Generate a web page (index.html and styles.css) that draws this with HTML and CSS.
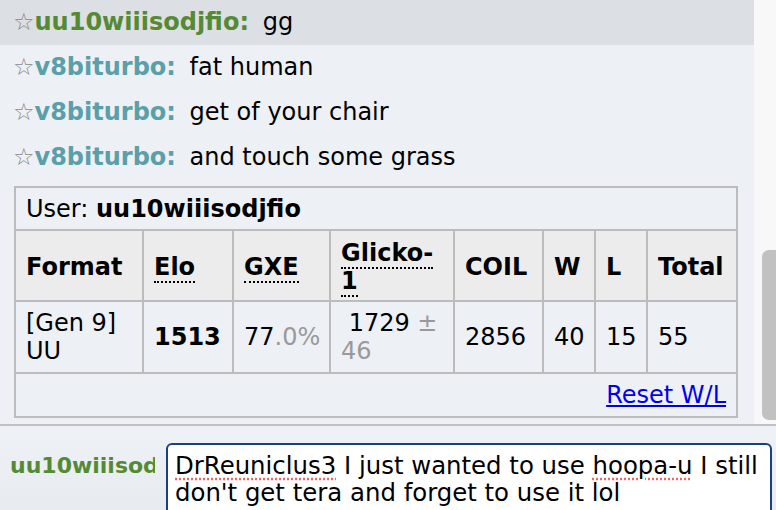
FILE: index.html
```html
<!DOCTYPE html>
<html lang="en">
<head>
    <meta charset="UTF-8">
    <title>Chat</title>
    <link rel="stylesheet" href="styles.css">
</head>
<body>
    <div class="top">
        <div class="chat">
            <div class="msg highlight"><span class="star">☆</span><strong class="name green">uu10wiiisodjfio:</strong> <span class="text">gg</span></div>
            <div class="msg"><span class="star">☆</span><strong class="name teal">v8biturbo:</strong> <span class="text">fat human</span></div>
            <div class="msg"><span class="star">☆</span><strong class="name teal">v8biturbo:</strong> <span class="text">get of your chair</span></div>
            <div class="msg"><span class="star">☆</span><strong class="name teal">v8biturbo:</strong> <span class="text">and touch some grass</span></div>

            <table class="ladder">
                <colgroup>
                    <col class="c-format">
                    <col class="c-elo">
                    <col class="c-gxe">
                    <col class="c-glicko">
                    <col class="c-coil">
                    <col class="c-w">
                    <col class="c-l">
                    <col class="c-total">
                </colgroup>
                <tr><td colspan="8" class="user">User: <strong>uu10wiiisodjfio</strong></td></tr>
                <tr class="head">
                    <th>Format</th>
                    <th><abbr>Elo</abbr></th>
                    <th><abbr>GXE</abbr></th>
                    <th><abbr>Glicko-1</abbr></th>
                    <th>COIL</th>
                    <th>W</th>
                    <th>L</th>
                    <th>Total</th>
                </tr>
                <tr class="data">
                    <td>[Gen 9] UU</td>
                    <td><strong>1513</strong></td>
                    <td>77<span class="dim">.0%</span></td>
                    <td>&nbsp;1729 <span class="dim">± 46</span></td>
                    <td>2856</td>
                    <td>40</td>
                    <td>15</td>
                    <td>55</td>
                </tr>
                <tr><td colspan="8" class="reset"><a href="#">Reset W/L</a></td></tr>
            </table>
        </div>
        <div class="track"><div class="thumb"></div></div>
    </div>

    <div class="bottom">
        <div class="me">uu10wiiisod</div>
        <div class="input"><span class="typo">DrReuniclus3</span> I just wanted to use <span class="typo">hoopa-u</span> I still don't get tera and forget to use it lol</div>
    </div>
</body>
</html>
```

FILE: styles.css
```css
/* chat layout */
body {
    margin: 0;
    width: 776px;
    height: 510px;
    overflow: hidden;
    font-family: "DejaVu Sans", Verdana, sans-serif;
    font-size: 24px;
    color: #000;
    background: #edf1f5;
}
.top {
    display: flex;
    height: 424px;
    border-bottom: 2px solid #bdbfc2;
}
.chat {
    width: 754px;
    background-color: #edf1f5;
    overflow: hidden;
}
.msg {
    height: 45px;
    line-height: 45px;
    padding-left: 13px;
    white-space: nowrap;
}
.highlight {
    background-color: #dcdfe3;
}
.star {
    color: #888;
}
.name {
    margin-right: 6px;
}
.green {
    color: #548a33;
}
.teal {
    color: #5a9fa9;
}
.track {
    flex: 1;
    background-color: #f8f8f8;
    display: flex;
    justify-content: flex-end;
    align-items: flex-end;
    padding-bottom: 4px;
}
.thumb {
    width: 14px;
    height: 170px;
    background-color: #c1c1c1;
    border-radius: 7px 0 0 7px;
}

/* ladder table */
.ladder {
    margin: 6px 0 0 14px;
    width: 722px;
    border-collapse: collapse;
    table-layout: fixed;
    border: 2px solid #bcbcbc;
}
.ladder td, .ladder th {
    border: 2px solid #bcbcbc;
    padding: 0 10px;
    text-align: left;
    vertical-align: middle;
    line-height: 28px;
}
.ladder .user {
    height: 41px;
}
.head th {
    background-color: #ececec;
    height: 67px;
    padding-top: 2px;
}
.data td {
    height: 70px;
}
abbr {
    text-decoration: none;
    border-bottom: 2px dotted #000;
}
.c-format { width: 128px; }
.c-elo { width: 90px; }
.c-gxe { width: 97px; }
.c-glicko { width: 124px; }
.c-coil { width: 89px; }
.c-w { width: 52px; }
.c-l { width: 52px; }
.c-total { width: 90px; }
.dim {
    color: #999;
}
.ladder .reset {
    text-align: right;
    height: 42px;
}
.reset a {
    color: #0000ee;
}

/* input bar */
.bottom {
    display: flex;
    align-items: flex-start;
    padding-top: 17px;
    background: linear-gradient(#eef1f5, #e5e9ee);
    height: 100px;
}
.me {
    width: 145px;
    margin: 10px 11px 0 10px;
    overflow: hidden;
    white-space: nowrap;
    color: #548a33;
    font-weight: bold;
    font-size: 22px;
}
.input {
    width: 591px;
    background-color: #fff;
    border: 2px solid #1e3f7e;
    border-radius: 6px;
    padding: 7px 4px 8px 7px;
    line-height: 27px;
    font-size: 24.4px;
}
.typo {
    text-decoration: underline dotted #e66;
    text-underline-offset: 4px;
}
```
